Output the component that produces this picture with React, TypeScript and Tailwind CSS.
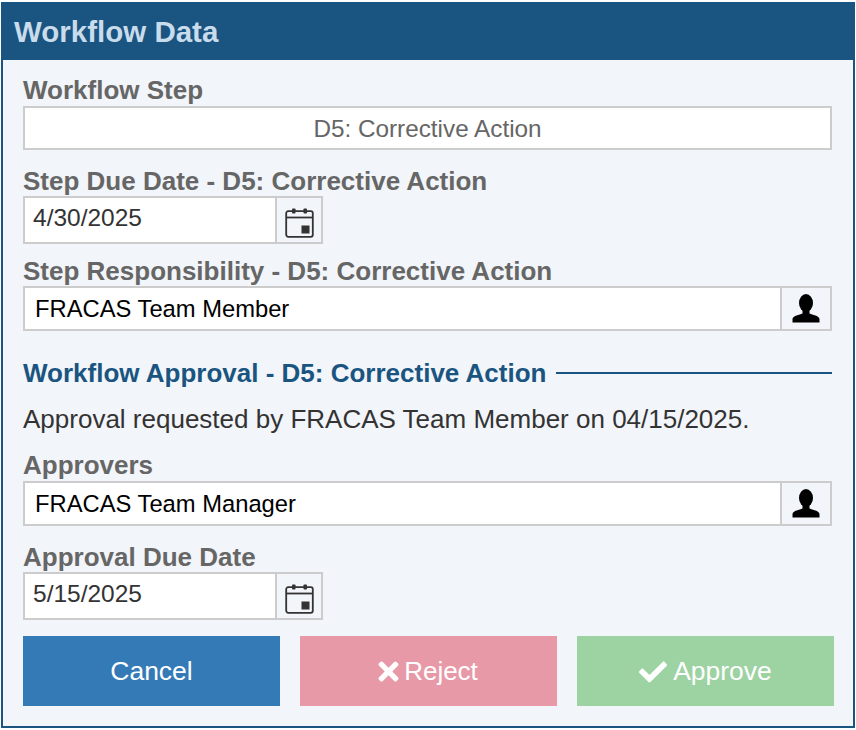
import React from 'react';
import { FaCheck, FaTimes } from 'react-icons/fa';

const CalendarIcon: React.FC = () => (
  <svg width="29" height="30" viewBox="0 0 29 30" fill="none">
    <rect x="1.2" y="3.2" width="26.6" height="25.6" rx="2" stroke="#333" strokeWidth="1.8" />
    <path d="M1.500 9.500H27.500" stroke="#333" strokeWidth="1.800" />
    <rect x="7" y="0.5" width="3.500" height="5" rx="0.800" fill="#333" />
    <rect x="18.500" y="0.500" width="3.500" height="5" rx="0.800" fill="#333" />
    <rect x="16.500" y="17.500" width="8" height="8" fill="#333" />
  </svg>
);

const UserIcon: React.FC = () => (
  <svg width="28" height="29" viewBox="0 0 28 29">
    <ellipse cx="14" cy="9" rx="7" ry="9" fill="#000" />
    <path d="M10.500 16h7v3.500c3 1.500 9.500 2 10 5.500v3.500H.5V25c.5-3.500 7-4 10-5.500z" fill="#000" />
  </svg>
);

const Label: React.FC<{ text: string }> = ({ text }) => (
  <div className="text-[26px] font-bold leading-[30px] text-[#666]">{text}</div>
);

const DateField: React.FC<{ value: string }> = ({ value }) => (
  <div className="flex h-[48px] w-[300px] border-2 border-[#ccc]">
    <div className="flex-1 bg-white pl-[8px] pt-[5px] text-[24.5px] leading-[30px] text-[#333]">{value}</div>
    <div className="flex w-[46px] items-center justify-center border-l-2 border-[#ccc] pt-[6px]">
      <CalendarIcon />
    </div>
  </div>
);

const UserField: React.FC<{ value: string }> = ({ value }) => (
  <div className="flex h-[45px] w-[809px] border-2 border-[#ccc]">
    <div className="flex flex-1 items-center bg-white pl-[10px] pt-[1px] text-[23.75px] text-black">{value}</div>
    <div className="flex w-[50px] items-center justify-center border-l-2 border-[#ccc]">
      <UserIcon />
    </div>
  </div>
);

const App: React.FC = () => {
  return (
    <div className="h-[730px] w-[856px] bg-white pl-[1px] pt-[2px] font-['Liberation_Sans',Arial,sans-serif]">
      <div className="flex h-[726px] w-[854px] flex-col border-2 border-[#1a5480] bg-[#f2f5f9]">
        <div className="flex h-[56px] shrink-0 items-center bg-[#1a5480] pl-[11px] text-[29.5px] font-bold text-[#c9dcec]">
          Workflow Data
        </div>
        <div className="flex flex-1 flex-col pl-[20px] pt-[15px]">
          <Label text="Workflow Step" />
          <div className="mt-[1px] flex h-[44px] w-[809px] items-center justify-center border-2 border-[#ccc] bg-white pt-[2px] text-[24.3px] text-[#666]">
            D5: Corrective Action
          </div>
          <div className="mt-[16px]">
            <Label text="Step Due Date - D5: Corrective Action" />
          </div>
          <DateField value="4/30/2025" />
          <div className="mt-[12px]">
            <Label text="Step Responsibility - D5: Corrective Action" />
          </div>
          <UserField value="FRACAS Team Member" />
          <div className="mt-[27px] flex w-[809px] items-center gap-[10px]">
            <span className="text-[26px] font-bold leading-[30px] text-[#1a5480]">
              Workflow Approval - D5: Corrective Action
            </span>
            <div className="h-[2px] flex-1 bg-[#1a5480]" />
          </div>
          <div className="mt-[16px] text-[26px] leading-[30px] text-[#333]">
            Approval requested by FRACAS Team Member on 04/15/2025.
          </div>
          <div className="mt-[16px]">
            <Label text="Approvers" />
          </div>
          <div className="mt-[1px]">
            <UserField value="FRACAS Team Manager" />
          </div>
          <div className="mt-[16px]">
            <Label text="Approval Due Date" />
          </div>
          <DateField value="5/15/2025" />
          <div className="mt-[16px] flex gap-[20px]">
            <button className="h-[70px] w-[257px] bg-[#337ab7] pt-[1px] text-[26.5px] text-white">Cancel</button>
            <button className="flex h-[70px] w-[257px] items-center justify-center gap-[1px] bg-[#e899a7] pr-[5px] pt-[1px] text-[26px] text-white">
              <FaTimes size={29} />
              Reject
            </button>
            <button className="flex h-[70px] w-[257px] items-center justify-center gap-[6px] bg-[#9dd2a2] pt-[1px] text-[26.5px] text-white">
              <FaCheck size={28} />
              Approve
            </button>
          </div>
        </div>
      </div>
    </div>
  );
};

export default App;
